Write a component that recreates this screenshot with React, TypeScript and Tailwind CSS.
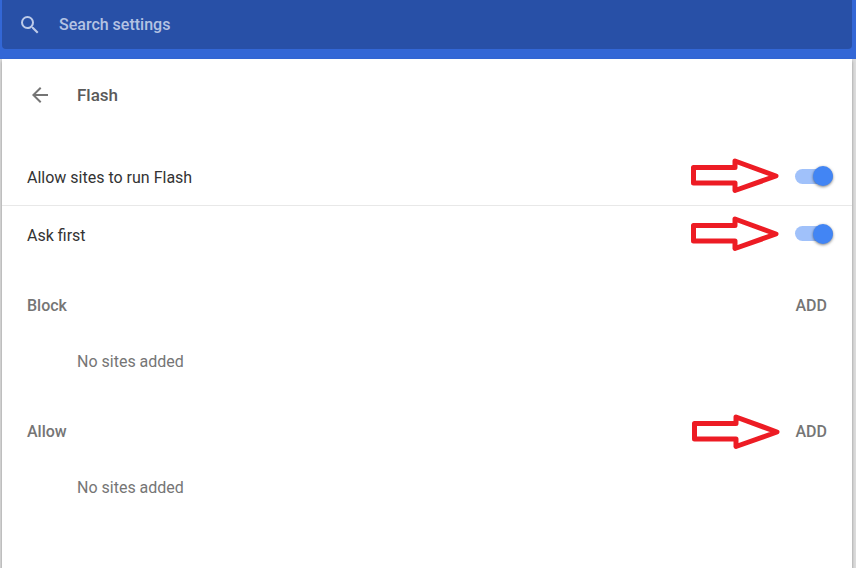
import { useState } from "react";

function PointerArrow() {
  return (
    <svg aria-hidden className="shrink-0" fill="none" height="36" viewBox="0 0 88 36" width="88">
      <path
        d="M2.5 9.5H44V3L85 18L44 32.5V25H2.5Z"
        stroke="#ed1c24"
        strokeLinejoin="round"
        strokeWidth="5"
      />
    </svg>
  );
}

function ToggleRow({ id, label }: { id: string; label: string }) {
  const [checked, setChecked] = useState(true);

  return (
    <div className="flex h-[57px] items-center pr-[19px] pb-0.5 pl-[25px]">
      <label className="flex-1 pt-1 text-[#333333]" htmlFor={id}>
        {label}
      </label>
      <div className="flex items-center gap-4">
        <PointerArrow />
        <input
          checked={checked}
          className="flex h-[15px] w-[38px] cursor-pointer appearance-none items-center rounded-full bg-gray-300 before:h-5 before:w-5 before:shrink-0 before:rounded-full before:bg-white before:shadow-[0_1px_3px_rgba(0,0,0,0.5)] checked:justify-end checked:bg-[#a0c1fa] checked:before:bg-[#4285f4]"
          id={id}
          onChange={(event) => setChecked(event.target.checked)}
          role="switch"
          type="checkbox"
        />
      </div>
    </div>
  );
}

function SiteList({ title, pointed }: { title: string; pointed?: boolean }) {
  return (
    <section className="text-[#757575]">
      <div className="flex h-14 items-center justify-between px-[25px]">
        <h2 className="font-medium">{title}</h2>
        <div className="flex items-center gap-4">
          {pointed ? <PointerArrow /> : null}
          <button className="cursor-pointer font-medium" type="button">
            ADD
          </button>
        </div>
      </div>
      <p className="flex h-14 items-center pl-[75px]">No sites added</p>
    </section>
  );
}

export default function App() {
  return (
    <div className="flex min-h-screen flex-col bg-[#dcdcdc] font-['Roboto',sans-serif] text-base leading-6">
      <header className="bg-[#3367d6] pr-1 pb-2.5 pl-0.5">
        <label className="flex h-[49px] items-center gap-[17px] rounded-b-sm bg-[#2850a7] pl-4">
          <svg aria-hidden className="shrink-0 fill-[#bdcbe9]" height="24" viewBox="0 0 24 24" width="24">
            <path d="M15.5 14h-.79l-.28-.27A6.471 6.471 0 0 0 16 9.5 6.5 6.5 0 1 0 9.5 16c1.61 0 3.09-.59 4.23-1.57l.27.28v.79l5 4.99L20.49 19l-4.99-5zm-6 0C7.01 14 5 11.99 5 9.5S7.01 5 9.5 5 14 7.01 14 9.5 11.99 14 9.5 14z" />
          </svg>
          <input
            aria-label="Search settings"
            className="min-w-0 flex-1 bg-transparent font-medium text-white outline-none placeholder:text-[#b4c3e3]"
            placeholder="Search settings"
            type="text"
          />
        </label>
      </header>

      <main className="mr-1 ml-0.5 flex-1 bg-white shadow-[0_2px_3px_rgba(0,0,0,0.35)]">
        <div className="flex h-[72px] items-center gap-[25px] pl-[26px]">
          <button aria-label="Back" className="cursor-pointer" type="button">
            <svg aria-hidden className="fill-[#757575]" height="24" viewBox="0 0 24 24" width="24">
              <path d="M20 11H7.83l5.59-5.59L12 4l-8 8 8 8 1.41-1.41L7.83 13H20v-2z" />
            </svg>
          </button>
          <h1 className="text-[17px] font-medium text-[#5a5a5a]">Flash</h1>
        </div>

        <div className="divide-y divide-[#e8e8e8] pt-[18px]">
          <ToggleRow id="allow-flash" label="Allow sites to run Flash" />
          <ToggleRow id="ask-first" label="Ask first" />
        </div>

        <div className="grid gap-3.5 pt-[15px]">
          <SiteList title="Block" />
          <SiteList pointed title="Allow" />
        </div>
      </main>
    </div>
  );
}
